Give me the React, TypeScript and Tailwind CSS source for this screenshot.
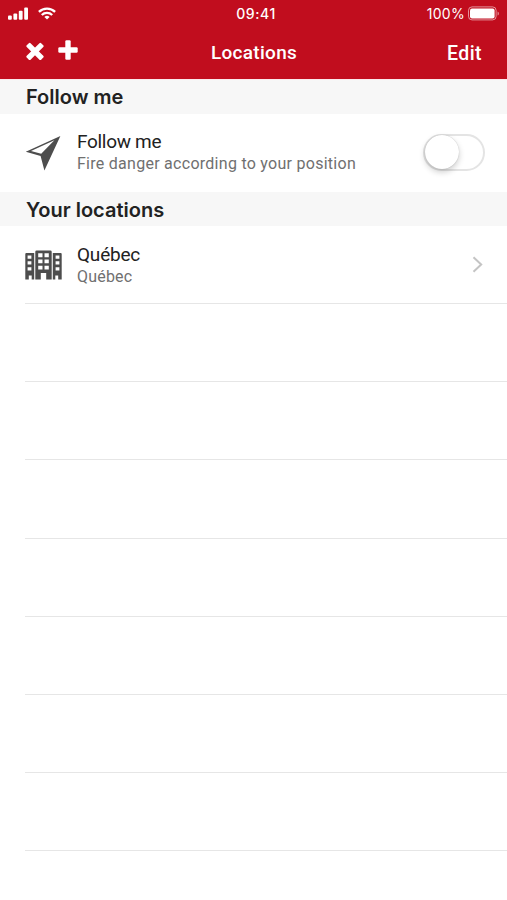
import { useState } from "react";

const emptyRows = [1, 2, 3, 4, 5, 6, 7];

function StatusBar() {
  return (
    <div className="grid h-[27px] grid-cols-3 items-center pl-2 pr-[7px]">
      <div className="flex items-center gap-[9px]">
        <svg width="21" height="13" viewBox="0 0 21 13" fill="#fff">
          <rect x="0" y="8.4" width="3.8" height="4.3" rx="1" />
          <rect x="5.4" y="6.4" width="3.8" height="6.3" rx="1" />
          <rect x="10.8" y="3.8" width="3.8" height="8.9" rx="1" />
          <rect x="16.2" y="0.5" width="3.8" height="12.2" rx="1" />
        </svg>
        <svg width="18" height="13" viewBox="0 0 18 13" fill="none" stroke="#fff" strokeWidth="2.3">
          <path d="M0.9 4.9a11.5 11.5 0 0 1 16.2 0" />
          <path d="M3.8 8a7.4 7.4 0 0 1 10.4 0" />
          <path d="M9 12.6 6.4 10a3.7 3.7 0 0 1 5.2 0Z" fill="#fff" stroke="none" />
        </svg>
      </div>
      <span className="pl-1 pt-px text-center font-[Inter] text-[14px] font-medium leading-none tracking-[0.6px]">09:41</span>
      <div className="flex items-center justify-end gap-[3px]">
        <span className="pt-px font-[Inter] text-[14px] leading-none tracking-[0.3px]">100%</span>
        <svg width="32" height="15" viewBox="0 0 32 15" fill="none">
          <rect x="0.5" y="0.9" width="27.6" height="13" rx="3.5" stroke="#fff" strokeOpacity="0.55" />
          <rect x="2" y="2.4" width="24.6" height="10" rx="2" fill="#fff" />
          <path d="M29.6 5.4c1.6.6 1.6 3.6 0 4.2Z" fill="#fff" fillOpacity="0.6" />
        </svg>
      </div>
    </div>
  );
}

function SectionTitle({ children }: { children: string }) {
  return (
    <h2 className="flex h-[34px] items-center bg-[#f7f7f7] pl-[26px] font-[Inter] text-[20px] font-semibold text-[#222]">{children}</h2>
  );
}

export default function App() {
  const [follow, setFollow] = useState(false);

  return (
    <div className="h-[900px] w-[507px] overflow-hidden bg-white font-[Roboto,sans-serif]">
      <header className="h-[79px] bg-[#c10d1e] text-white">
        <StatusBar />
        <div className="grid h-[52px] grid-cols-3 items-center pl-[26px] pr-[25px]">
          <div className="flex items-center gap-[14px] pb-1">
            <button aria-label="Close">
              <svg width="18" height="18" viewBox="0 0 18 18" fill="#fff">
                <g transform="translate(0 .4) rotate(45 9 9)">
                  <rect x="6.3" y="-1.2" width="5.4" height="20.4" rx="1.2" />
                  <rect x="-1.2" y="6.3" width="20.4" height="5.4" rx="1.2" />
                </g>
              </svg>
            </button>
            <button aria-label="Add" className="pb-[2px]">
              <svg width="20" height="20" viewBox="0 0 20 20" fill="#fff"><rect x="7.3" y="0.3" width="5.4" height="19.4" rx="1.2" /><rect x="0.3" y="7.3" width="19.4" height="5.4" rx="1.2" /></svg>
            </button>
          </div>
          <h1 className="pt-px text-center text-[19px] font-medium tracking-[0.3px]">Locations</h1>
          <button className="pt-px text-right text-[19.5px] font-medium tracking-[0.4px]">Edit</button>
        </div>
      </header>

      <div className="h-px bg-[#fbe9eb]" />
      <SectionTitle>Follow me</SectionTitle>
      <div className="flex h-[78px] items-center pl-[25px] pr-[22px]">
        <svg width="36" height="36" viewBox="0 0 36 36" fill="#4d4d4d">
          <path fillRule="evenodd" d="M35.4 1 19.4 35.4 15.6 21 .8 16.8ZM29.4 5.2 6 16 16.2 18.8Z" />
        </svg>
        <div className="ml-4 flex-1">
          <div className="text-[19px] leading-[22px] tracking-[-0.3px] text-[#222]">Follow me</div>
          <div className="text-[16px] leading-[22px] tracking-[0.27px] text-[#707070]">Fire danger according to your position</div>
        </div>
        <button
          role="switch"
          aria-checked={follow}
          onClick={() => setFollow(!follow)}
          className={`mb-[2px] flex h-[37px] w-[62px] items-center rounded-full border-2 border-[#e4e4e4] ${follow ? "justify-end bg-green-500" : "bg-white"}`}
        >
          <span className="size-[34px] shrink-0 rounded-full bg-white shadow-[0_3px_6px_rgba(0,0,0,0.2),0_0_1px_rgba(0,0,0,0.25)]" />
        </button>
      </div>

      <div className="h-[34px] bg-[#f7f7f7] pt-px">
        <SectionTitle>Your locations</SectionTitle>
      </div>
      <div className="flex h-[77px] items-center bg-white pl-[25px] pr-[24px]">
        <svg width="37" height="30" viewBox="0 0 37 30" fill="#4d4d4d">
          <path fillRule="evenodd" d="M.3 4Q.3 3 1.3 3H9.2V29.5H6.7V25.5H3.8V29.5H.3ZM2.6 5.5V8.7H6.4V5.5ZM2.6 11.3V14.5H6.4V11.3ZM2.6 17.2V20.4H6.4V17.2Z" />
          <path fillRule="evenodd" d="M10.3 1.8Q10.3 .4 11.7 .4H25.3Q26.7 .4 26.7 1.8V29.5H21.2V23H15.8V29.5H10.3ZM13.2 3.3V7.2H17.5V3.3ZM19.5 3.3V7.2H23.8V3.3ZM13.2 9.6V13.3H17.5V9.6ZM19.5 9.6V13.3H23.8V9.6ZM13.2 15.7V19.4H17.5V15.7ZM19.5 15.7V19.4H23.8V15.7Z" />
          <path fillRule="evenodd" d="M27.8 3H35.7Q36.7 3 36.7 4V29.5H33.2V25.5H30.3V29.5H27.8ZM30.6 5.5V8.7H34.4V5.5ZM30.6 11.3V14.5H34.4V11.3ZM30.6 17.2V20.4H34.4V17.2Z" />
        </svg>
        <div className="ml-[15px] flex-1 pt-[2px]">
          <div className="text-[19px] leading-[22px] tracking-[-0.2px] text-[#222]">Québec</div>
          <div className="text-[16px] leading-[22px] tracking-[0.2px] text-[#707070]">Québec</div>
        </div>
        <svg width="11" height="17" viewBox="0 0 11 17" fill="none" stroke="#c4c4c4" strokeWidth="2"><path d="M1.5 1.2 9.2 8.5 1.5 15.8" /></svg>
      </div>

      <div className="ml-[25px] border-t border-[#e6e6e6]">
        {emptyRows.map(row => (
          <div key={row} className="h-[78.2px] border-b border-[#e6e6e6]" />
        ))}
      </div>
    </div>
  );
}
